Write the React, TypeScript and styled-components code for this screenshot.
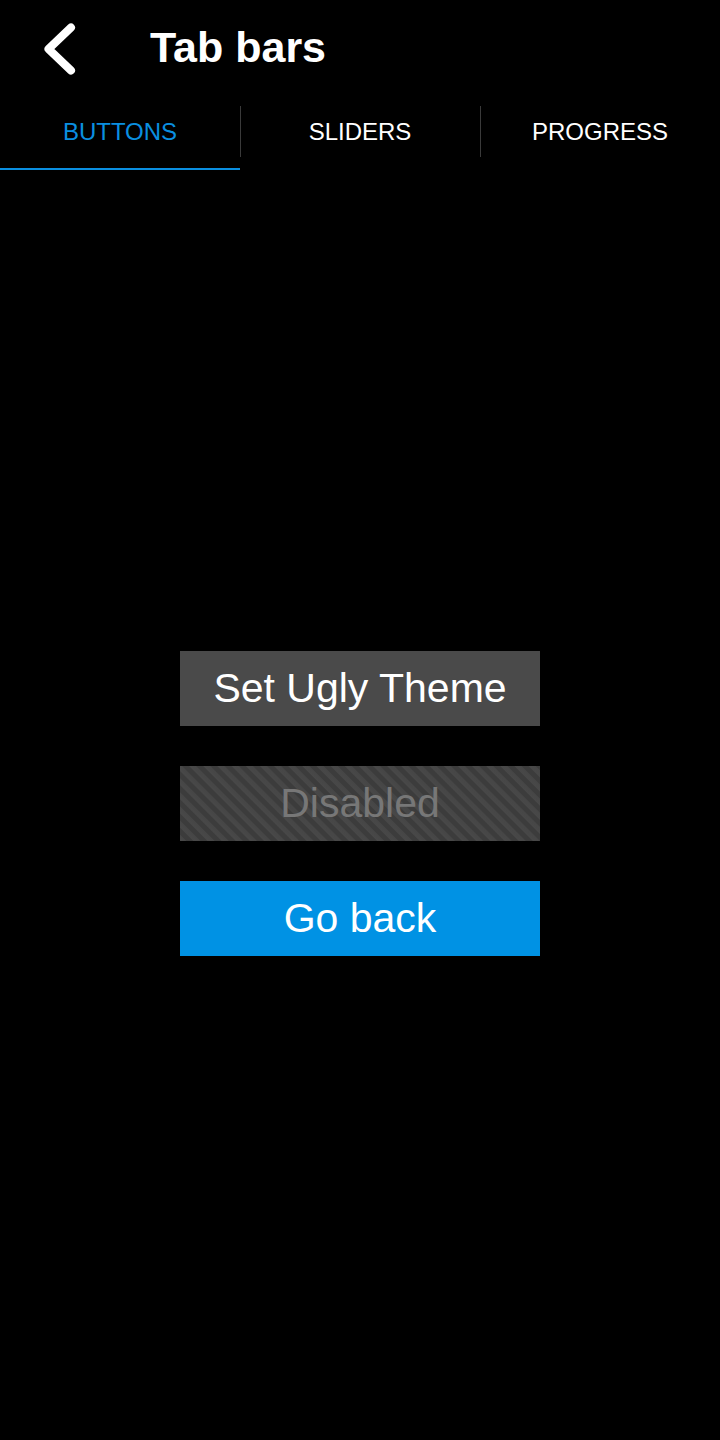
import React from "react";
import styled, { createGlobalStyle } from "styled-components";

const Global = createGlobalStyle`
  html, body { margin: 0; padding: 0; background: #000; }
  body { font-family: "Liberation Sans", Arial, sans-serif; color: #fff; }
`;

const Screen = styled.div`
  min-height: 100vh;
  display: flex;
  flex-direction: column;
  background: #000;
`;

const Header = styled.header`
  height: 94px;
  display: flex;
  align-items: center;
  padding-left: 42px;
  gap: 72px;
`;

const BackButton = styled.button`
  background: none;
  border: none;
  padding: 0;
  width: 36px;
  height: 54px;
  display: flex;
  align-items: center;
  justify-content: center;
  margin-top: 4px;
  cursor: pointer;
`;

const Title = styled.h1`
  margin: 0;
  font-size: 43px;
  font-weight: 700;
  color: #fff;
  line-height: 1;
`;

const TabBar = styled.nav`
  display: flex;
  height: 76px;
`;

const Tab = styled.div<{ $active?: boolean; $divider?: boolean }>`
  position: relative;
  flex: 1;
  display: flex;
  align-items: center;
  justify-content: center;
  font-size: 24px;
  color: ${(p) => (p.$active ? "#0a8fe0" : "#fff")};
  border-bottom: 2px solid ${(p) => (p.$active ? "#0a8fe0" : "transparent")};
  box-sizing: border-box;
  padding-top: 1px;
  &::before {
    content: "";
    display: ${(p) => (p.$divider ? "block" : "none")};
    position: absolute;
    left: 0;
    top: 12px;
    height: 51px;
    width: 1px;
    background: #3a3a3a;
  }
`;

const Content = styled.main`
  flex: 1;
  display: flex;
  flex-direction: column;
  align-items: center;
  justify-content: center;
  gap: 40px;
  padding-bottom: 4px;
`;

const Button = styled.button<{ $variant: "default" | "disabled" | "primary" }>`
  width: 360px;
  height: 75px;
  border: none;
  padding: 0;
  font-family: "Liberation Sans", Arial, sans-serif;
  font-size: 41px;
  color: ${(p) => (p.$variant === "disabled" ? "#777" : "#fff")};
  background: ${(p) =>
    p.$variant === "primary"
      ? "#0092e4"
      : p.$variant === "disabled"
      ? "repeating-linear-gradient(45deg, #484848 0px, #464646 4px, #3c3c3c 5px, #3c3c3c 9px, #484848 10px)"
      : "#4a4a4a"};
  cursor: ${(p) => (p.$variant === "disabled" ? "default" : "pointer")};
`;

const Chevron = () => (
  <svg width="36" height="54" viewBox="0 0 36 54">
    <polyline
      points="29,5.5 6.5,27 29,48.5"
      fill="none"
      stroke="#fff"
      strokeWidth="8"
      strokeLinecap="round"
      strokeLinejoin="round"
    />
  </svg>
);

export default function App() {
  return (
    <Screen>
      <Global />
      <Header>
        <BackButton aria-label="Back">
          <Chevron />
        </BackButton>
        <Title>Tab bars</Title>
      </Header>
      <TabBar>
        <Tab $active>BUTTONS</Tab>
        <Tab $divider>SLIDERS</Tab>
        <Tab $divider>PROGRESS</Tab>
      </TabBar>
      <Content>
        <Button $variant="default">Set Ugly Theme</Button>
        <Button $variant="disabled" disabled>
          Disabled
        </Button>
        <Button $variant="primary">Go back</Button>
      </Content>
    </Screen>
  );
}
